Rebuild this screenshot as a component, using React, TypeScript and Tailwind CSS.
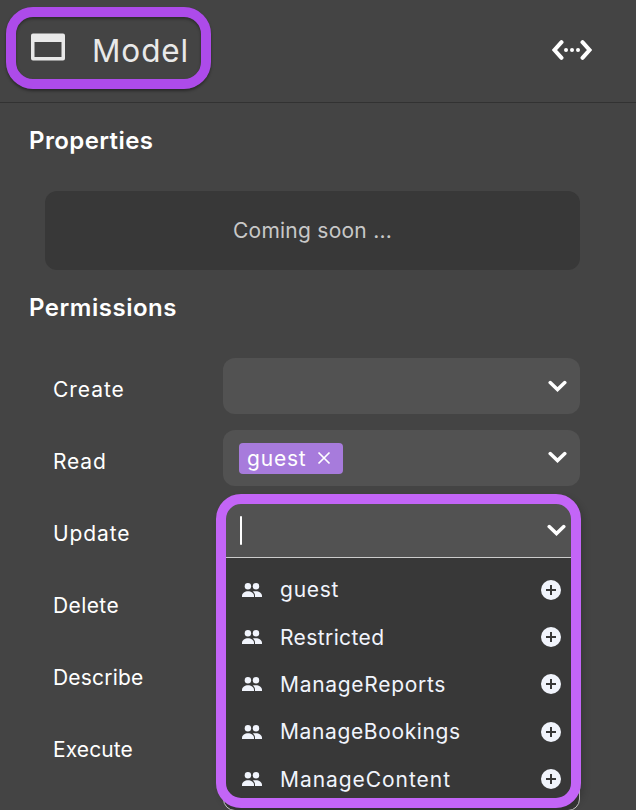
import React from 'react';

function Chevron({ className = '' }: { className?: string }) {
  return (
    <svg viewBox="0 0 20 12" className={`h-3 w-5 shrink-0 ${className}`} fill="none" stroke="#fff" strokeWidth="3.5" strokeLinecap="round">
      <path d="M3.200 2.600 10.500 9.600l7.300-7" />
    </svg>
  );
}

function Group() {
  return (
    <svg viewBox="0 0 20 14" className="h-3.5 w-5 shrink-0" fill="#f1f4fc">
      <circle cx="5.9" cy="3.2" r="3.2" />
      <circle cx="14" cy="3.2" r="3.2" />
      <path d="M0 14v-1.2C0 10 3 8.200 6 8.200s6 1.800 6 4.600V14z" />
      <path d="M13 14v-1.200c0-1.900-.9-3.400-2.300-4.200 1-.3 2.200-.4 3.300-.4 3 0 6 1.800 6 4.600V14z" />
    </svg>
  );
}

function Plus() {
  return (
    <svg viewBox="0 0 20 20" className="size-5 shrink-0">
      <circle cx="10" cy="10" r="10" fill="#f1f4fc" />
      <path d="M5 10h10M10 5v10" stroke="#383838" strokeWidth="2" />
    </svg>
  );
}

const labels = [
  { name: 'Create', track: 'tracking-[0.95px]' },
  { name: 'Read', track: 'tracking-[0.85px]' },
  { name: 'Update', track: 'tracking-[0.9px]' },
  { name: 'Delete', track: 'tracking-[0.4px]' },
  { name: 'Describe', track: 'tracking-[0.2px]' },
  { name: 'Execute', track: 'tracking-[0.1px]' },
];

const roles = [
  { name: 'guest', track: 'tracking-[0.75px]' },
  { name: 'Restricted', track: 'tracking-[0.4px]' },
  { name: 'ManageReports', track: 'tracking-[0.7px]' },
  { name: 'ManageBookings', track: 'tracking-[0.63px]' },
  { name: 'ManageContent', track: 'tracking-[0.95px]' },
];

export default function App() {
  return (
    <div className="h-[810px] w-[636px] overflow-hidden bg-[#444] font-[Inter,sans-serif] text-white">
      <header className="flex h-[103px] items-start justify-between border-b border-[#323232] pt-[7px] pr-11 pl-1.5">
        <div className="flex h-[82px] w-[205px] items-center rounded-[27px] border-[10px] border-[#ad4bea] pl-[15px] shadow-[0_2px_3px_rgba(0,0,0,0.4),inset_0_2px_3px_rgba(0,0,0,0.35)]">
          <svg viewBox="0 0 34 28" className="h-7 w-[34px] shrink-0 -translate-y-px">
            <path fillRule="evenodd" fill="#e9e9e9" d="M2 .5h30a2 2 0 0 1 2 2v23a2 2 0 0 1-2 2H2a2 2 0 0 1-2-2v-23a2 2 0 0 1 2-2zM3.500 9v15h27V9z" />
          </svg>
          <h1 className="ml-[27px] pt-[5px] text-[31.5px] leading-10 font-normal tracking-[0.9px] text-[#e9e9e9]">Model</h1>
        </div>
        <svg viewBox="0 0 40 22" className="mt-8 h-[22px] w-10" fill="none" stroke="#fff" strokeWidth="4" strokeLinecap="round">
          <path d="M9.500 3.200 2.500 11l7 7.800M30.500 3.200l7 7.800-7 7.800" />
          <path d="M14 11h.01M20 11h.01M26 11h.01" />
        </svg>
      </header>

      <main>
        <h2 className="pt-[22px] pl-[29px] text-[24px] leading-8 font-semibold tracking-[0.4px]">Properties</h2>
        <div className="mt-[34px] ml-[45px] flex h-[79px] w-[535px] items-center justify-center rounded-xl bg-[#383838] text-[21px] font-normal tracking-[0.25px] text-[#c8c8c8]">
          <span>Coming soon ...</span>
        </div>
        <h2 className="pt-[22px] pl-[29px] text-[24px] leading-8 font-semibold tracking-[0.52px]">Permissions</h2>

        <div className="mt-[34px] flex pl-[53px]">
          <div className="flex w-[170px] flex-col gap-4">
            {labels.map((l) => (
              <div key={l.name} className="flex h-14 items-center pt-[7px] text-[21px] font-normal">
                <span className={l.track}>{l.name}</span>
              </div>
            ))}
          </div>
          <div className="flex w-[357px] flex-col gap-4">
            <div className="flex h-14 items-center justify-end rounded-xl bg-[#525252] pr-[13px]">
              <Chevron />
            </div>
            <div className="flex h-14 items-center justify-between rounded-xl bg-[#525252] pr-[13px] pl-4">
              <div className="flex h-[31px] w-[104px] items-center justify-between rounded bg-[#a77bdc] pr-3 pl-2 text-[21px] font-normal">
                <span className="pt-0.5 tracking-[0.8px]">guest</span>
                <svg viewBox="0 0 14 14" className="size-3.5" stroke="#fff" strokeWidth="1.700">
                  <path d="m1.500 1.500 11 11M12.500 1.500l-11 11" />
                </svg>
              </div>
              <Chevron className="-translate-y-px" />
            </div>
            <div className="relative h-14 rounded-t-xl bg-[#525252]">
              <div className="flex h-[55px] items-center justify-between pr-3.5 pl-[17px] pt-px">
                <span className="h-[29px] w-0.5 rounded-full bg-white" />
                <Chevron />
              </div>
              <div className="absolute top-[55px] left-0 h-[254px] w-[357px] rounded-b-xl border border-[#ccc] bg-[#383838] pt-2">
                {roles.map((r) => (
                  <div key={r.name} className="flex h-[47.300px] items-center pr-[18px] pl-[18px] text-[21px] font-normal text-[#f1f4fc]">
                    <Group />
                    <span className={`ml-[18px] flex-1 pt-px ${r.track}`}>{r.name}</span>
                    <Plus />
                  </div>
                ))}
              </div>
              <div className="absolute -top-2 -left-[7px] h-[314px] w-[365px] rounded-[25px] border-[10px] border-[#c365f7] shadow-[3px_3px_7px_rgba(0,0,0,0.16)]" />
            </div>
          </div>
        </div>
      </main>
    </div>
  );
}
